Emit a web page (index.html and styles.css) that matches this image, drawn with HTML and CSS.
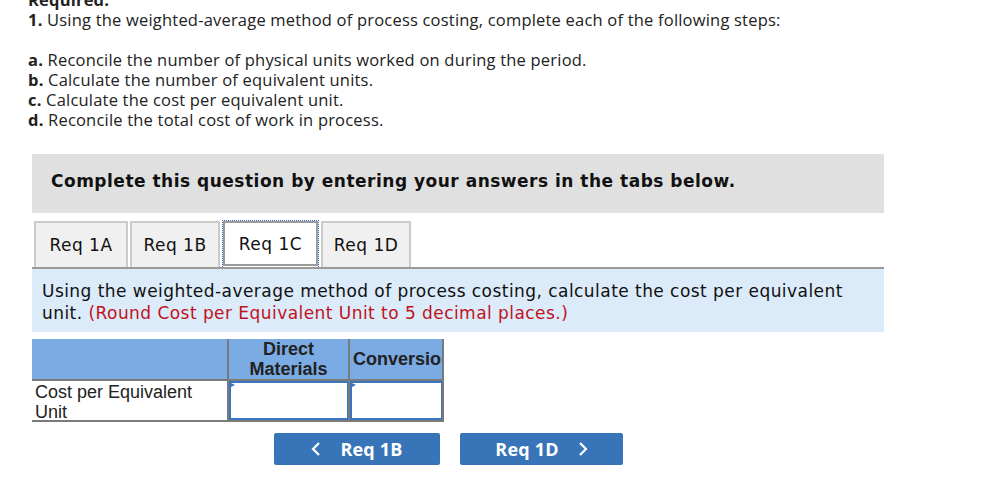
FILE: index.html
```html
<!DOCTYPE html>
<html>
<head>
<meta charset="utf-8">
<link rel="stylesheet" href="styles.css">
</head>
<body>
<div class="intro">
  <p class="req">Required:</p>
  <p><b>1.</b> Using the weighted-average method of process costing, complete each of the following steps:</p>
  <p class="blank">&nbsp;</p>
  <p><b>a.</b> Reconcile the number of physical units worked on during the period.</p>
  <p><b>b.</b> Calculate the number of equivalent units.</p>
  <p><b>c.</b> Calculate the cost per equivalent unit.</p>
  <p><b>d.</b> Reconcile the total cost of work in process.</p>
</div>
<div class="panel">
  <div class="banner">Complete this question by entering your answers in the tabs below.</div>
  <div class="tabs">
    <div class="tab first">Req 1A</div>
    <div class="tab">Req 1B</div>
    <div class="tab active">Req 1C</div>
    <div class="tab">Req 1D</div>
  </div>
  <div class="info">Using the weighted-average method of process costing, calculate the cost per equivalent unit. <span class="red">(Round Cost per Equivalent Unit to 5 decimal places.)</span></div>
  <div class="tbl">
    <div class="th c1"></div>
    <div class="th c2">Direct<br>Materials</div>
    <div class="th c3"><span class="clip">Conversion</span></div>
    <div class="td c1">Cost per Equivalent<br>Unit</div>
    <div class="td in c2"><div class="box"></div></div>
    <div class="td in c3"><div class="box"></div></div>
  </div>
  <div class="nav">
    <div class="btn"><svg width="10" height="16" viewBox="0 0 10 16"><path d="M8 2 L2 8 L8 14" fill="none" stroke="#fff" stroke-width="2.2"/></svg><span>Req 1B</span></div>
    <div class="btn next"><span>Req 1D</span><svg width="10" height="16" viewBox="0 0 10 16"><path d="M2 2 L8 8 L2 14" fill="none" stroke="#fff" stroke-width="2.2"/></svg></div>
  </div>
</div>
</body>
</html>
```
FILE: styles.css
```css
html, body { margin: 0; padding: 0; background: #fff; }
body { width: 984px; height: 498px; overflow: hidden; }
.intro {
  margin-top: -10px;
  padding-left: 28px;
  font-family: "Open Sans", "Liberation Sans", sans-serif;
  font-size: 16.5px;
  letter-spacing: 0.2px;
  line-height: 20px;
  color: #222;
}
.intro p { margin: 0; }
.intro .req { font-weight: bold; }
.intro b { font-weight: bold; }
.panel { margin: 24px 0 0 32px; width: 852px; }
.banner {
  height: 59px;
  background: #e0e0e0;
  box-sizing: border-box;
  padding: 0 0 6px 19px;
  display: flex;
  align-items: center;
  font-family: "DejaVu Sans", Verdana, sans-serif;
  font-weight: bold;
  font-size: 17px;
  letter-spacing: 0.5px;
  color: #111;
}
.tabs {
  margin-top: 8px;
  padding-left: 2px;
  display: flex;
  gap: 2px;
  border-bottom: 2px solid #9a9a9a;
  height: 46px;
}
.tab {
  box-sizing: border-box;
  width: 90px;
  height: 46px;
  display: flex;
  align-items: center;
  justify-content: center;
  background: #f0f0f0;
  border: 2px solid #cbcbcb;
  border-bottom: none;
  font-family: "DejaVu Sans", Verdana, sans-serif;
  font-size: 17px;
  letter-spacing: 0.5px;
  white-space: nowrap;
  color: #111;
}
.tab.first { width: 94px; }
.tab.active {
  width: 97px;
  background: #fff;
  border: 1px dotted #2a6ab8;
  border-bottom: none;
  outline: 2px solid #9a9a9a;
  outline-offset: -3px;
  margin-top: -1px;
  height: 47px;
}
.info {
  background: #dbebf9;
  height: 63px;
  box-sizing: border-box;
  padding: 11px 10px 0 10px;
  font-family: "DejaVu Sans", Verdana, sans-serif;
  font-size: 17px;
  letter-spacing: 0.45px;
  line-height: 22px;
  color: #111;
}
.red { color: #c1121c; }
.tbl {
  margin-top: 7px;
  display: grid;
  grid-template-columns: 197px 121px 94px;
  grid-template-rows: 42px 41px;
  font-family: "Liberation Sans", Arial, sans-serif;
  font-size: 18px;
  color: #222;
}
.th {
  background: #7aabe2;
  box-sizing: border-box;
  border-right: 2.5px solid #7a7a7a;
  border-bottom: 2px solid #7a7a7a;
  font-weight: bold;
  text-align: center;
  line-height: 20px;
  display: flex;
  align-items: center;
  justify-content: center;
}
.th.c1 { border-right-width: 2px; }
.th.c3 { justify-content: flex-start; padding-left: 3px; overflow: hidden; white-space: nowrap; }
.td {
  box-sizing: border-box;
  border-right: 2.5px solid #7a7a7a;
  border-bottom: 2px solid #7a7a7a;
}
.td.c1 { padding: 1px 0 0 3px; line-height: 20px; border-right-width: 2px; }
.td.in { position: relative; }
.box {
  height: 100%;
  box-sizing: border-box;
  border: 2px solid #3a76c0;
  border-right-width: 1px;
  background: #fff;
}
.td.in::before {
  content: "";
  position: absolute;
  left: 2px;
  top: 2px;
  border-left: 4px solid #3a76c0;
  border-top: 2.5px solid transparent;
  border-bottom: 2.5px solid transparent;
}
.nav {
  margin: 11px 0 0 242px;
  display: flex;
  gap: 20px;
}
.btn {
  width: 166px;
  height: 32px;
  background: #3775b8;
  border-radius: 2px;
  display: flex;
  align-items: center;
  justify-content: center;
  gap: 19px;
  color: #fff;
  font-family: "Open Sans", "Liberation Sans", sans-serif;
  font-weight: bold;
  font-size: 18px;
  letter-spacing: 0.2px;
}
.btn.next { width: 163px; }
```
